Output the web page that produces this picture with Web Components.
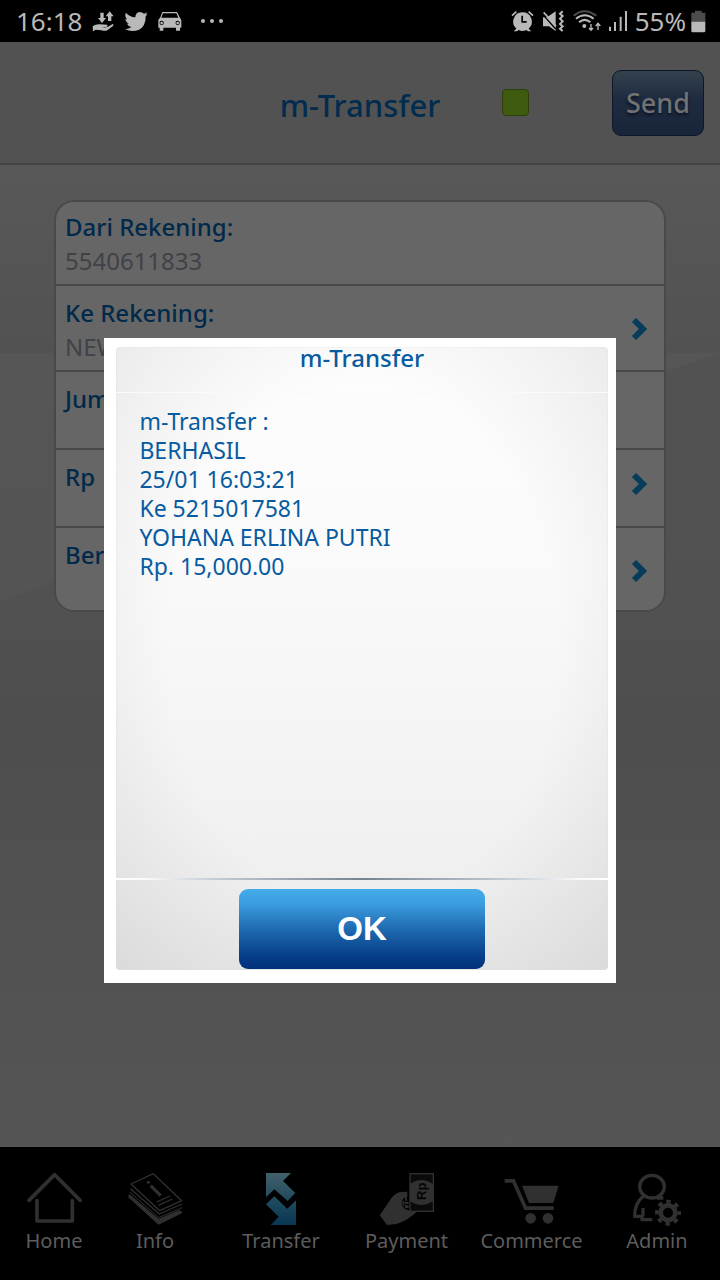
<!DOCTYPE html>
<html lang="id">
<head>
<meta charset="utf-8">
<meta name="viewport" content="width=device-width, initial-scale=1">
<title>m-Transfer</title>
<style>
  html, body { margin: 0; min-height: 100%; background: #000; }
  body { font-family: "Noto Sans", "Open Sans", sans-serif; }
</style>
</head>
<body>
<transfer-app></transfer-app>

<template id="t-app">
  <style>
    :host { display: flex; flex-direction: column; min-height: 100vh; position: relative; background: #555; }
    main { flex: 1; position: relative; padding: 35px 54px;
      background: linear-gradient(#585858 0, #525252 188px, #515151 430px, #4e4e4e 560px, #555 100%); }
    main::before { content: ""; position: absolute; inset: 188px 0 auto 0; height: 249px;
      background: linear-gradient(#565656, #545454); clip-path: polygon(0 0, 100% 0, 93% 7%, 8% 91%, 0 100%); }
    field-card { position: relative; }
    .layer { position: absolute; inset: 42px 0 2px 0; display: flex; align-items: center; justify-content: center; }
  </style>
  <status-bar></status-bar>
  <app-header>m-Transfer</app-header>
  <main>
    <field-card>
      <field-row label="Dari Rekening:">5540611833</field-row>
      <field-row label="Ke Rekening:" arrow>NEW</field-row>
      <field-row label="Jum" compact></field-row>
      <field-row label="Rp" compact arrow></field-row>
      <field-row label="Ber" arrow></field-row>
    </field-card>
  </main>
  <nav-bar>
    <nav-item label="Home">
      <svg viewBox="78 96 165 162" width="55" height="54" fill="none" stroke="#303030" stroke-width="11" stroke-linecap="round" stroke-linejoin="round"><path d="M84 181 161 104 237 181M108 182V243H214V182"/></svg>
    </nav-item>
    <nav-item label="Info">
      <svg viewBox="384 96 165 162" width="55" height="54" fill="none" stroke="#303030" stroke-width="4" stroke-linejoin="round"><path d="M393 132 460 101 545 182 479 212Z"/><path d="M391 146 478 222 546 192"/><path d="M389 156 476 233 546 203" stroke-width="3"/><path fill="#303030" d="M388 165 476 239 538 212 545 218 476 252 387 171Z"/><path d="M452 137 482 167" stroke-width="9"/><path d="M470 186 510 168M476 196 517 177"/><ellipse cx="445" cy="127" rx="5" ry="4" fill="#303030" stroke="none"/></svg>
    </nav-item>
    <nav-item label="Transfer">
      <svg viewBox="78 96 90 162" width="30" height="54"><defs><linearGradient id="g" x1="0" y1="98" x2="0" y2="256" gradientUnits="userSpaceOnUse"><stop stop-color="#44606b"/><stop offset=".45" stop-color="#244d60"/><stop offset="1" stop-color="#073754"/></linearGradient></defs><path fill="url(#g)" d="M78 99H153L129 123 166 159 143 183 103 148 78 172ZM78 193 103 169 142 206 168 181V255H92L116 230Z"/></svg>
    </nav-item>
    <nav-item label="Payment">
      <svg viewBox="413 96 165 162" width="55" height="54"><path fill="#303030" d="M415 226 443 185Q458 158 480 156L498 155V172Q482 172 481 190 482 208 505 212H529Q503 239 466 252L437 255Z"/><path fill="#303030" d="M484 182H489V201Q482 196 484 182ZM491 173H497V182H491ZM491 186H502V192H491ZM491 196H502V204H491Z"/><rect x="506" y="101" width="70" height="113" fill="#0a0a0a" stroke="#303030" stroke-width="4"/><path fill="#303030" d="M506 132Q540 108 575 132V183Q540 207 506 183Z"/><text transform="translate(553 180) rotate(-90)" font-family="Liberation Sans, sans-serif" font-weight="700" font-size="39" fill="#050505">Rp</text></svg>
    </nav-item>
    <nav-item label="Commerce">
      <svg viewBox="70 96 165 162" width="55" height="54" fill="#303030"><path d="M124 137H234L218 189H145ZM72 117H102L138 199H219V210H131L95 128H72Z"/><circle cx="150" cy="235" r="16"/><circle cx="202" cy="235" r="16"/></svg>
    </nav-item>
    <nav-item label="Admin">
      <svg viewBox="456 96 150 162" width="50" height="54" fill="none" stroke="#303030" stroke-width="10"><ellipse cx="516" cy="140" rx="37" ry="34"/><path d="M491 167Q463 190 464 229H486V239H517M489 204V229M530 174 550 174" stroke-linejoin="round"/><circle cx="564" cy="218" r="22" stroke-width="14"/><circle cx="564" cy="218" r="33" stroke-width="12" stroke-dasharray="13 12.92" stroke-dashoffset="6"/></svg>
    </nav-item>
  </nav-bar>
  <div class="layer">
    <message-dialog heading="m-Transfer" action="OK">m-Transfer :
BERHASIL
25/01 16:03:21
Ke 5215017581
YOHANA ERLINA PUTRI
Rp. 15,000.00</message-dialog>
  </div>
</template>

<template id="t-status">
  <style>
    :host { display: flex; align-items: center; justify-content: space-between; height: 42px; padding: 0 14px 0 16px;
      background: #000; color: #b9b9b9; font-size: 26px; line-height: 42px; white-space: nowrap; }
    div { display: flex; align-items: center; gap: 8px; height: 42px; }
    .left { gap: 10px; }
    .left svg:last-child { margin-left: 8px; }
    svg { display: block; fill: #b9b9b9; }
    .battery { margin-left: -3px; }
  </style>
  <div class="left">
    <span>16:18</span>
    <svg viewBox="279 30 69 66" width="23" height="22"><path d="M304 38H314V54H321L309 69 297 54H304ZM327 63V49H320L332 34 344 49H337V63ZM281 79Q292 71 304 73L324 74Q328 79 321 81H309Q318 84 327 80L341 72Q346 74 341 79L325 91Q318 94 307 91L290 89 282 94Z"/></svg>
    <svg viewBox="379 33 69 63" width="23" height="21"><path d="M447 41Q443 44 439 45 444 42 445 37 441 40 436 41 431 36 423 36 410 38 410 52 393 51 382 38 376 50 386 58 382 58 380 56 381 67 391 71 388 72 385 71 388 79 398 81 390 88 379 87 398 98 420 90 442 78 441 49 444 46 447 41Z"/></svg>
    <svg viewBox="476 33 72 63" width="24" height="21"><path fill-rule="evenodd" d="M489 36H533L541 52 546 60V83H542V92H530V83H492V92H481V83H477V60L483 52ZM491 40 486 53H537L531 40ZM487 62A6 6 0 1 0 487 75 6 6 0 1 0 487 62ZM535 62A6 6 0 1 0 535 75 6 6 0 1 0 535 62Z"/><circle cx="487" cy="69" r="4"/><circle cx="535" cy="69" r="4"/></svg>
    <svg viewBox="600 33 72 63" width="24" height="21"><circle cx="609" cy="63" r="6"/><circle cx="636" cy="63" r="6"/><circle cx="663" cy="63" r="6"/></svg>
  </div>
  <div>
    <svg viewBox="33 28 69 69" width="23" height="23"><path fill-rule="evenodd" d="M67 35A28 28 0 0 1 86 84L94 92H84L79 88Q67 94 56 88L51 92H41L49 84A28 28 0 0 1 67 35ZM64 45V66H80V61H69V45Z"/><path d="M36 45 49 33M99 45 86 33" stroke="#b9b9b9" stroke-width="5"/></svg>
    <svg viewBox="125 28 69 69" width="23" height="23"><path d="M128 50H140L166 32V91L146 77H128Z"/><path d="M127 41 166 85" stroke="#000" stroke-width="4"/><path d="M130 35 167 76" stroke="#b9b9b9" stroke-width="5"/><path d="M187 32 179 39 187 46 179 54 187 62 179 70 187 77 179 84 187 91" fill="none" stroke="#b9b9b9" stroke-width="6"/></svg>
    <svg viewBox="216 28 84 69" width="28" height="23"><g fill="none" stroke="#b9b9b9" stroke-width="6"><path stroke="#4c4c4c" d="M218 45Q250 18 286 45"/><path d="M225 54Q251 33 278 54M234 65Q251 50 268 65"/><path stroke-width="4" d="M270 70V88M264 82 270 89 276 82M291 88V70M284 76 291 68 298 76"/></g><circle cx="250" cy="76" r="6"/></svg>
    <svg viewBox="318 30 54 66" width="18" height="22"><path d="M318 80H324V93H318ZM333 66H339V93H333ZM350 50H356V93H350ZM366 33H372V93H366Z"/></svg>
    <span>55%</span>
    <svg class="battery" viewBox="572 28 45 69" width="15" height="23"><path fill="#4c4c4c" d="M584 30H604V36H615V64H573V36H584Z"/><path d="M573 63H615V91Q615 95 611 95H577Q573 95 573 91Z"/></svg>
  </div>
</template>

<template id="t-header">
  <style>
    :host { display: grid; grid-template-columns: 1fr auto 1fr; align-items: center; height: 121px; padding: 0 16px;
      background: #525252; border-bottom: 2px solid #434343; }
    h1 { grid-column: 2; margin: 0; padding-top: 4px; font-size: 31px; font-weight: 500; line-height: 40px; color: #012c4f; }
    .side { display: flex; align-items: center; justify-content: space-between; padding-left: 62px; }
    .lamp { width: 25px; height: 25px; border: 1px solid #2c3f0d; border-radius: 4px; background: #3f5b10; }
    button { width: 92px; height: 66px; padding: 0; border: 1px solid #0d1728; border-radius: 9px;
      background: linear-gradient(#34414d, #1e2b40 45%, #172439); color: #727272;
      font: 500 27px/64px "Noto Sans", sans-serif; text-shadow: 0 2px 3px #0a1220; }
  </style>
  <h1><slot></slot></h1>
  <div class="side"><span class="lamp"></span><button type="button">Send</button></div>
</template>

<template id="t-card">
  <style>
    :host { display: block; border-radius: 20px; background: #666; overflow: hidden; box-shadow: inset 0 0 0 2px #494949; }
  </style>
  <slot></slot>
</template>

<template id="t-row">
  <style>
    :host { display: flex; align-items: center; box-sizing: border-box; min-height: 86px; padding: 10px 16px 8px 11px;
      border-bottom: 2px solid #494949; }
    :host([compact]) { min-height: 78px; padding-bottom: 18px; }
    :host(:last-child) { min-height: 84px; border-bottom: 0; }
    .text { flex: 1; align-self: flex-start; font-size: 24px; line-height: 34px; }
    .label { font-weight: 500; color: #01294a; }
    .value { color: #3f4247; height: 32px; }
    :host([compact]) .value { display: none; }
    button { display: none; padding: 0; border: 0; background: none; }
    :host([arrow]) button { display: block; }
    svg { display: block; }
  </style>
  <div class="text"><div class="label"></div><div class="value"><slot></slot></div></div>
  <button type="button"><svg width="20" height="26" viewBox="0 0 20 26" fill="none" stroke="#073c5a" stroke-width="6"><path d="M4 4 13 13 4 22"/></svg></button>
</template>

<template id="t-nav">
  <style>
    :host { display: block; background: #000; }
    nav { display: grid; grid-template-columns: 76fr 126fr 126fr 125fr 125fr 126fr; padding: 25px 0 24px 16px; }
  </style>
  <nav><slot></slot></nav>
</template>

<template id="t-item">
  <style>
    :host { display: block; min-width: 0; }
    a { display: flex; flex-direction: column; align-items: center; color: #5d5d5d; text-decoration: none;
      font-size: 20px; line-height: 30px; white-space: nowrap; }
    ::slotted(svg) { display: block; }
  </style>
  <a href="#"><slot></slot><span></span></a>
</template>

<template id="t-dialog">
  <style>
    :host { display: block; box-sizing: border-box; width: 71%; padding: 9px 8px 13px 12px; background: #fff; color: #075ba0; }
    .panel { border-radius: 4px; box-shadow: inset 0 0 2px #ddd;
      background: radial-gradient(ellipse 72% 75% at 50% 48%, rgba(0,0,0,0) 55%, rgba(0,0,0,.08) 100%),
        linear-gradient(#fdfdfd, #fafafa 35%, #efefef 88%, #ececec); }
    h2 { margin: 0; padding: 0 0 16px; text-align: center; font-size: 24px; font-weight: 500; line-height: 22px; height: 29px;
      border-bottom: 1px solid #fafafa; }
    .body { min-height: 471px; padding: 14px 23px 0; font-size: 23px; line-height: 29px; white-space: pre-line; }
    .rule { height: 2px; background: linear-gradient(90deg, #fff 0, #fafafa 6%, #c4ccd4 20%, #76838f 50%, #c4ccd4 80%, #fafafa 94%, #fff); }
    .foot { display: flex; justify-content: center; padding: 9px 0 1px; }
    button { width: 50%; min-height: 80px; padding: 0; border: 0; border-radius: 9px; color: #fff;
      background: linear-gradient(#45ace9, #3b9ddf 18%, #1d68ae 52%, #053c86 86%, #02317a);
      font: 700 33px/76px "Liberation Sans", Arial, sans-serif; }
  </style>
  <section class="panel" role="dialog" aria-labelledby="h">
    <h2 id="h"></h2>
    <div class="body"><slot></slot></div>
    <div class="rule"></div>
    <div class="foot"><button type="button"></button></div>
  </section>
</template>

<script>
  class Base extends HTMLElement {
    constructor() {
      super();
      const t = document.getElementById(this.constructor.template);
      this.attachShadow({ mode: "open" }).append(t.content.cloneNode(true));
    }
    $(s) { return this.shadowRoot.querySelector(s); }
  }
  const define = (name, template, connect) => customElements.define(name, class extends Base {
    static template = template;
    connectedCallback() { if (connect) connect(this); }
  });

  define("status-bar", "t-status");
  define("app-header", "t-header");
  define("field-card", "t-card");
  define("field-row", "t-row", el => {
    el.$(".label").textContent = el.getAttribute("label");
    el.$("button").setAttribute("aria-label", el.getAttribute("label"));
  });
  define("nav-bar", "t-nav");
  define("nav-item", "t-item", el => { el.$("span").textContent = el.getAttribute("label"); });
  define("message-dialog", "t-dialog", el => {
    el.$("h2").textContent = el.getAttribute("heading");
    el.$("button").textContent = el.getAttribute("action");
  });
  define("transfer-app", "t-app");
</script>
</body>
</html>
